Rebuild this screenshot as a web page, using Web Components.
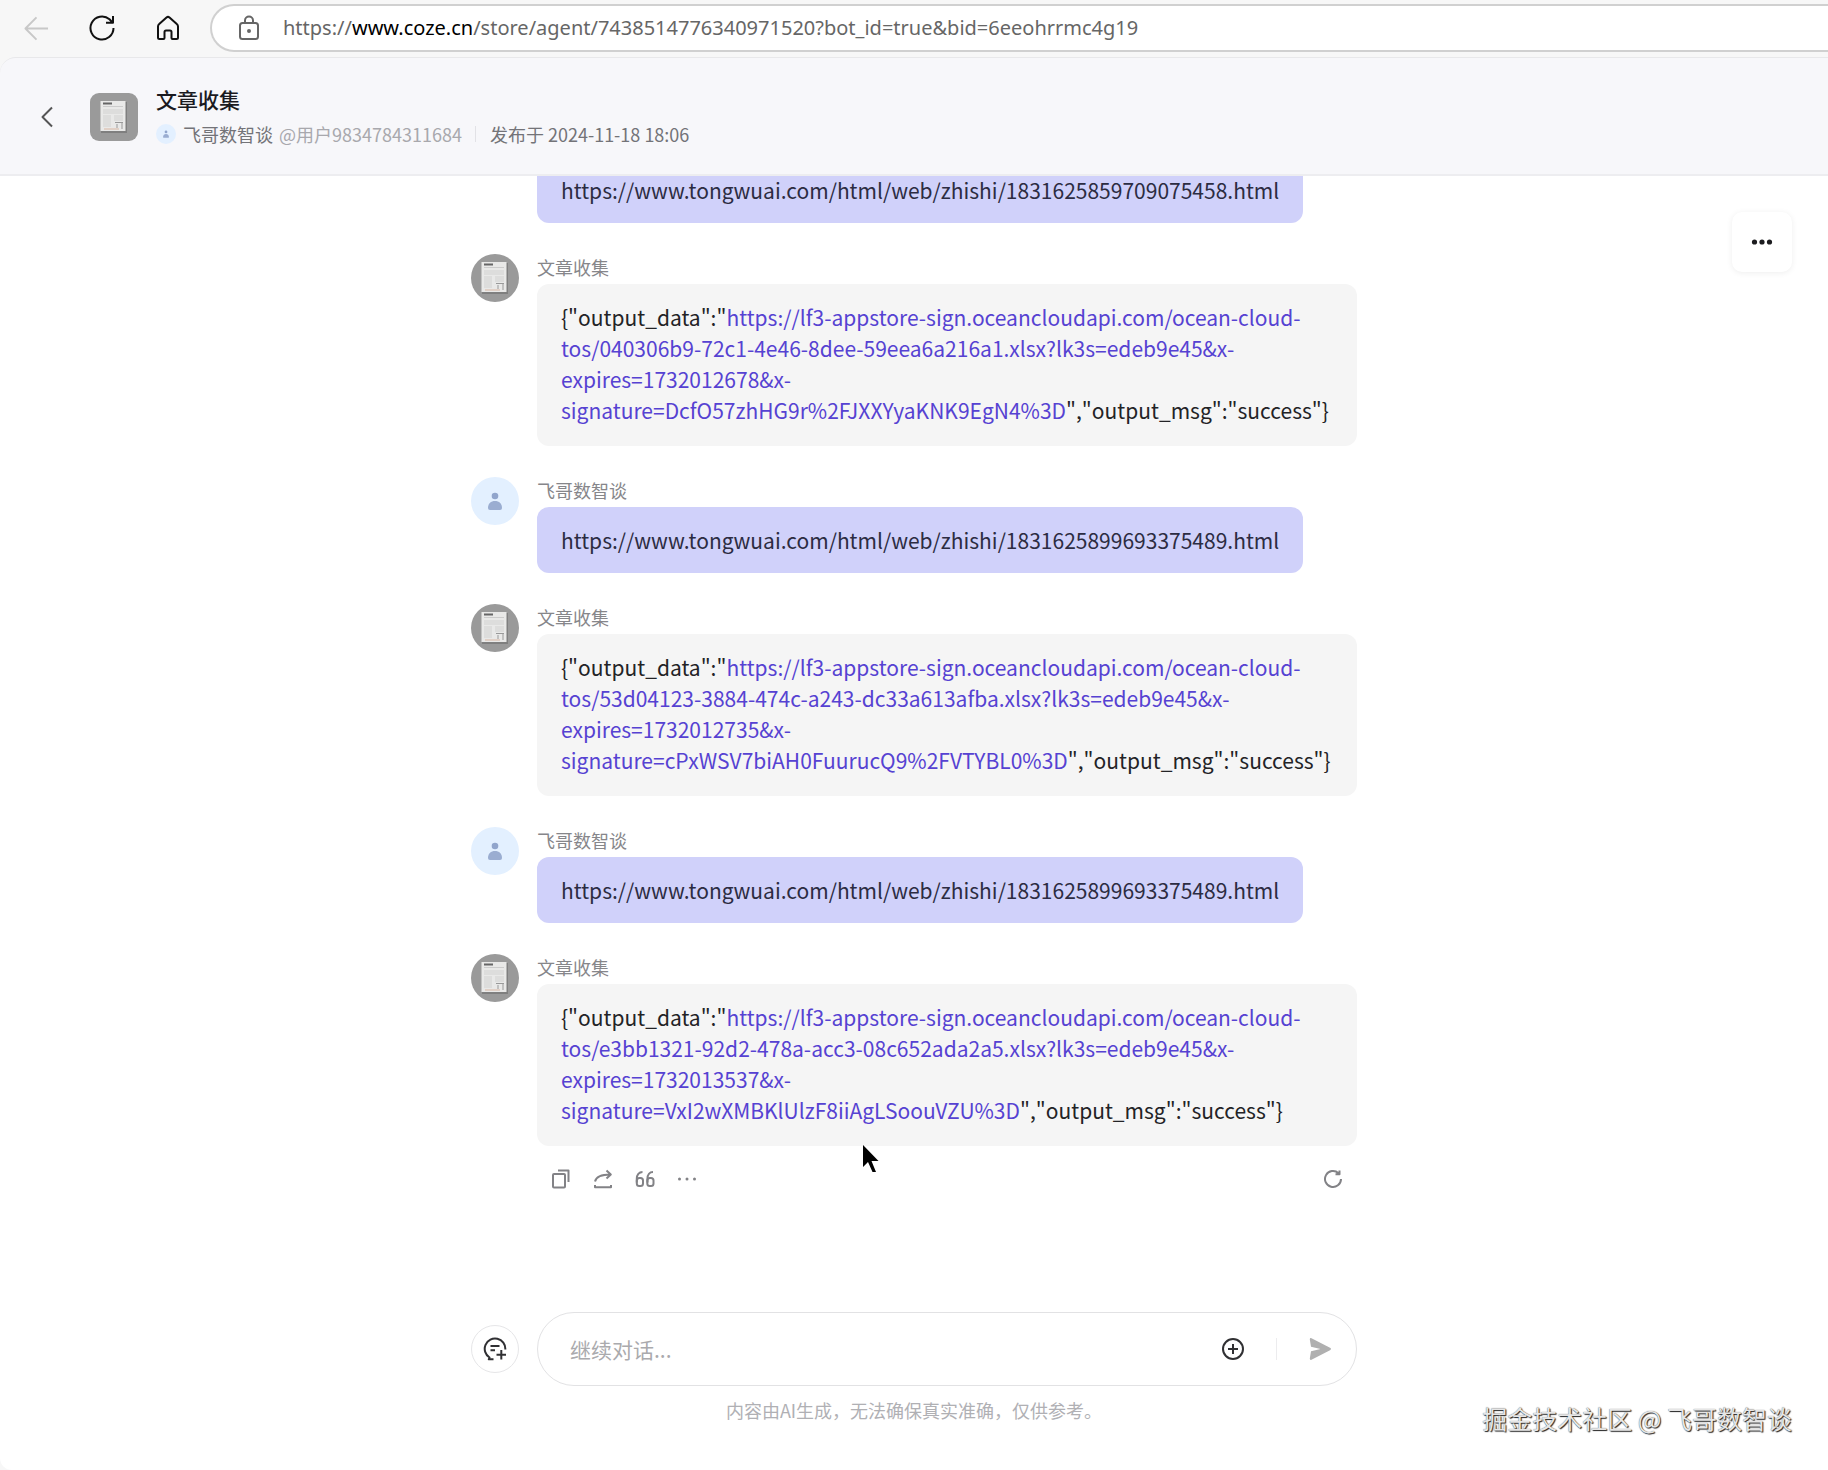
<!DOCTYPE html>
<html lang="zh-CN">
<head>
<meta charset="utf-8">
<title>文章收集</title>
<style>
  body {
    margin: 0;
    background: #f7f7f7;
    font-family: "Noto Sans CJK SC", sans-serif;
  }
</style>
</head>
<body>
<chat-app></chat-app>

<script>
const sharedStyle = `
  * { box-sizing: border-box; }
  button {
    display: flex;
    align-items: center;
    justify-content: center;
    margin: 0;
    padding: 0;
    border: 0;
    background: none;
    color: inherit;
    font: inherit;
  }
  svg { display: block; flex: none; }
`;

class BaseElement extends HTMLElement {
  constructor() {
    super();
    this._root = this.attachShadow({ mode: 'open' });
  }

  connectedCallback() {
    this._root.innerHTML = `<style>${sharedStyle}${this.getStyle()}</style>${this.getMarkup()}`;
  }
}

/* outline icons, one viewBox for each */
const ICONS = {
  back: ['0 0 26 26', '<path d="M25 13H1.500M13 1.500L1.500 13L13 24.500"/>'],
  reload: ['0 0 26 26', '<path d="M24.500 13A11.500 11.500 0 1 1 20.500 4.300L23.500 7.500M24 1V7.800H17"/>'],
  home: ['0 0 24 26', '<path d="M2 11.500Q2 10 3.200 9L10.500 2.500Q12 1.300 13.500 2.500L20.800 9Q22 10 22 11.500V22.500Q22 24 20.500 24H16.500Q15.500 24 15.500 23V17Q15.500 15.500 14 15.500H10Q8.500 15.500 8.500 17V23Q8.500 24 7.500 24H3.500Q2 24 2 22.500Z"/>'],
  lock: ['0 0 20 26', '<rect x="1" y="8" width="18" height="16" rx="2.500"/><path d="M6 8V5.500a4 4 0 0 1 8 0V8"/><circle cx="10" cy="16" r="1" fill="currentColor"/>'],
  chevron: ['0 0 12 22', '<path d="M11 1.500L1.500 11L11 20.500"/>'],
  copy: ['0 0 20 20', '<rect x="2" y="5" width="12" height="13.500" rx="1"/><path d="M7 1.500H17.500V13"/>'],
  share: ['0 0 20 20', '<path d="M2 12.500C3 8 7 5.500 17.500 5.500M13.500 1.500L17.800 5.500L13.500 9.500M2 16V18.300H18V16"/>'],
  quote: ['0 0 20 20', '<path d="M7.500 3C4 3 1.800 6 1.800 9.500V13.500M12.500 13.500V9.500C12.500 6 14.500 3 18 3"/><rect x="1.800" y="9" width="6.200" height="8" rx="2.500"/><rect x="12.300" y="9" width="6.200" height="8" rx="2.500"/>'],
  dots: ['0 0 20 20', '<g fill="currentColor" stroke="none"><circle cx="2.500" cy="10" r="1.500"/><circle cx="10" cy="10" r="1.500"/><circle cx="17.500" cy="10" r="1.500"/></g>'],
  more: ['0 0 22 22', '<g fill="currentColor" stroke="none"><circle cx="3.500" cy="11" r="2.600"/><circle cx="11" cy="11" r="2.600"/><circle cx="18.500" cy="11" r="2.600"/></g>'],
  retry: ['0 0 20 20', '<path d="M18 10A8 8 0 1 1 15.500 4.200M16.500 1.500V5.300H12.500"/>'],
  fresh: ['0 0 24 24', '<path d="M22.300 12.500A10.300 10.300 0 1 0 6.500 20.500L5.800 22.300H10.500M7.500 9H16.500M7.500 13.200H12M18.300 13V22.500M13.500 17.800H23"/>'],
  plus: ['0 0 24 24', '<circle cx="12" cy="12" r="10"/><path d="M12 7V17M7 12H17"/>'],
  send: ['0 0 24 24', '<path fill="currentColor" stroke="none" d="M3.500 1.200L22 10.800Q24 12 22 13.200L3.500 22.800Q1.800 23.500 1.800 21.500L3 14.300L12.500 12L3 9.700L1.800 2.500Q1.800 .500 3.500 1.200Z"/>'],
};

function icon(name, width, stroke = 2, height = width) {
  const [box, body] = ICONS[name];
  return `<svg width="${width}" height="${height}" viewBox="${box}" fill="none" stroke="currentColor"
    stroke-width="${stroke}" stroke-linejoin="round" aria-hidden="true">${body}</svg>`;
}

class UserAvatar extends BaseElement {
  getStyle() {
    return `
      :host { display: block; flex: none; width: 48px; height: 48px; border-radius: 50%; overflow: hidden; }
      :host([shape="square"]) { border-radius: 9px; }
      :host([size="small"]) { width: 20px; height: 20px; }
      svg { width: 100%; height: 100%; }
    `;
  }

  getMarkup() {
    if (this.getAttribute('kind') === 'bot') {
      return `
      <svg viewBox="0 0 48 48">
        <rect width="48" height="48" fill="#9a9a9a"/>
        <rect x="11" y="9" width="26" height="31" fill="#7f7f7f"/>
        <rect x="10.500" y="8" width="25" height="30" fill="#e9e9e8"/>
        <path d="M13 10.500h9" stroke="#666" stroke-width="2"/>
        <path d="M13 13.500h20" stroke="#ccc"/>
        <path d="M13 16h20v5H13zM13 22h8v12h-8zM24 22h9v6h-9z" fill="#dddddc"/>
        <path d="M25 29.500h8M27 31v4M32 29v7" stroke="#999"/>
        <path d="M14 36h15" stroke="#d8b7a4"/>
      </svg>`;
    }
    return `
      <svg viewBox="0 0 48 48">
        <rect width="48" height="48" fill="#e3f0ff"/>
        <circle cx="24" cy="19" r="3.300" fill="#91a5cc"/>
        <path d="M17 31C17 26.500 20 24 24 24S31 26.500 31 31Q31 33 29 33H19Q17 33 17 31Z" fill="#9aadd1"/>
      </svg>`;
  }
}
customElements.define('user-avatar', UserAvatar);

class BrowserBar extends BaseElement {
  getStyle() {
    return `
      :host { display: flex; align-items: center; height: 57px; padding: 4px 0 5px 20px; color: #111; }
      nav { display: flex; gap: 34px; }
      button { width: 32px; height: 32px; }
      button:disabled { color: #c8c8c8; }
      .address {
        display: flex;
        flex: 1;
        align-items: center;
        gap: 24px;
        min-width: 0;
        height: 48px;
        margin-left: 26px;
        padding-left: 27px;
        border: 2px solid #d0d0d0;
        border-right: 0;
        border-radius: 24px 0 0 24px;
        background: #fff;
        color: #666;
        font: 20px/32px "Noto Sans", sans-serif;
        white-space: nowrap;
        overflow: hidden;
      }
    `;
  }

  getMarkup() {
    return `
      <nav>
        <button disabled aria-label="后退">${icon('back', 25, 2)}</button>
        <button aria-label="刷新">${icon('reload', 26, 2)}</button>
        <button aria-label="主页">${icon('home', 24, 2, 26)}</button>
      </nav>
      <div class="address">
        ${icon('lock', 20, 2, 26)}
        <slot></slot>
      </div>`;
  }
}
customElements.define('browser-bar', BrowserBar);

class AgentHeader extends BaseElement {
  getStyle() {
    return `
      :host {
        display: flex;
        align-items: center;
        height: 119px;
        padding: 2px 32px 0 31px;
        border-top: 1px solid #e8e8ea;
        border-bottom: 2px solid #ededf0;
        border-radius: 16px 0 0 0;
        background: #f7f7fa;
      }
      button { width: 32px; height: 32px; margin-right: 27px; color: #555; }
      .info { margin-left: 18px; }
      h1 { margin: 0; color: #1a1a1f; font-size: 21px; line-height: 34px; font-weight: 500; }
      .meta { display: flex; align-items: center; height: 36px; color: #737378; font-size: 18px; line-height: 28px; white-space: nowrap; }
      .name { margin: 0 6px 0 7px; }
      .account { color: #a8a8ad; }
      .meta i { width: 1px; height: 16px; margin: 0 14px 0 13px; background: #e2e2e6; }
    `;
  }

  getMarkup() {
    return `
      <button aria-label="返回">${icon('chevron', 12, 2, 22)}</button>
      <user-avatar kind="bot" shape="square"></user-avatar>
      <div class="info">
        <h1>${this.getAttribute('name')}</h1>
        <div class="meta">
          <user-avatar size="small"></user-avatar>
          <span class="name">${this.getAttribute('author')}</span>
          <span class="account">${this.getAttribute('account')}</span>
          <i></i>
          <span>${this.getAttribute('published')}</span>
        </div>
      </div>`;
  }
}
customElements.define('agent-header', AgentHeader);

class ChatMessage extends BaseElement {
  getStyle() {
    return `
      :host { display: flex; gap: 18px; }
      .avatar { flex: none; width: 48px; }
      .body { flex: 1; min-width: 0; }
      .name { height: 30px; color: #86868a; font-size: 18px; line-height: 26px; }
      .bubble {
        width: 100%;
        padding: 18px 24px 20px;
        border-radius: 12px;
        background: #f5f5f5;
        color: #232326;
        font-size: 21px;
        line-height: 31px;
      }
      :host([from="user"]) .bubble { width: fit-content; max-width: 100%; padding-bottom: 17px; background: #d0d1fa; color: #2c2c42; }
    `;
  }

  getMarkup() {
    const name = this.getAttribute('name');
    const kind = this.getAttribute('from');
    return `
      <div class="avatar">${name ? `<user-avatar kind="${kind}"></user-avatar>` : ''}</div>
      <div class="body">
        ${name ? `<div class="name">${name}</div>` : ''}
        <div class="bubble"><slot></slot></div>
        <slot name="actions"></slot>
      </div>`;
  }
}
customElements.define('chat-message', ChatMessage);

class MessageActions extends BaseElement {
  getStyle() {
    return `
      :host { display: flex; height: 42px; margin-top: 12px; padding: 0 3px; color: #828286; }
      button { width: 42px; height: 42px; }
      .retry { margin-left: auto; }
    `;
  }

  getMarkup() {
    return `
      <button aria-label="复制">${icon('copy', 20)}</button>
      <button aria-label="分享">${icon('share', 20)}</button>
      <button aria-label="引用">${icon('quote', 20)}</button>
      <button aria-label="更多">${icon('dots', 20)}</button>
      <button class="retry" aria-label="重新生成">${icon('retry', 20)}</button>`;
  }
}
customElements.define('message-actions', MessageActions);

class ChatComposer extends BaseElement {
  getStyle() {
    return `
      :host { display: block; }
      form { display: flex; align-items: center; gap: 18px; margin: 0; }
      .fresh { flex: none; width: 48px; height: 48px; border: 1px solid #e6e6e8; border-radius: 50%; color: #303033; }
      .field {
        display: flex;
        flex: 1;
        align-items: center;
        height: 74px;
        padding: 0 24px 0 32px;
        border: 1px solid #e2e2e4;
        border-radius: 37px;
        background: #fff;
      }
      input {
        flex: 1;
        min-width: 0;
        padding: 0;
        border: 0;
        outline: 0;
        background: none;
        font: 21px/32px "Noto Sans CJK SC", sans-serif;
      }
      input::placeholder { color: #aaaaad; opacity: 1; }
      .field button { width: 24px; height: 24px; color: #303033; }
      .field i { width: 1px; height: 22px; margin: 0 31px; background: #ececee; }
      .field .send { color: #b0b0b0; }
      p { margin: 11px 0 0; color: #b0b0b4; font-size: 18px; line-height: 26px; text-align: center; }
    `;
  }

  getMarkup() {
    return `
      <form>
        <button class="fresh" type="button" aria-label="新对话">${icon('fresh', 24, 2)}</button>
        <div class="field">
          <input type="text" aria-label="消息" placeholder="继续对话...">
          <button type="button" aria-label="添加">${icon('plus', 24, 2)}</button>
          <i></i>
          <button class="send" type="button" aria-label="发送">${icon('send', 24)}</button>
        </div>
      </form>
      <p><slot></slot></p>`;
  }
}
customElements.define('chat-composer', ChatComposer);

class ChatApp extends BaseElement {
  getStyle() {
    return `
      :host { display: flex; flex-direction: column; height: 100vh; overflow: hidden; }
      main { display: flex; flex: 1; flex-direction: column; min-height: 0; position: relative; border-radius: 0 0 0 12px; background: #fff; }
      a { color: #5642d2; text-decoration: none; }
      b { color: #000; font-weight: 400; }
      .column { width: 100%; max-width: 886px; margin: 0 auto; }
      .messages {
        display: flex;
        flex: 1;
        flex-direction: column;
        justify-content: flex-end;
        gap: 31px;
        min-height: 0;
        padding-bottom: 112px;
        overflow: hidden;
      }
      chat-composer { padding-bottom: 47px; }
      chat-message { position: relative; flex: none; }
      .more {
        position: absolute;
        top: 36px;
        right: 36px;
        width: 60px;
        height: 60px;
        border-radius: 10px;
        background: #fff;
        box-shadow: 0 1px 6px rgba(0, 0, 0, 0.07);
        color: #1c1c1f;
      }
      .cursor { position: absolute; top: 190px; left: 391px; }
      .mark {
        position: absolute;
        right: 36px;
        bottom: 34px;
        color: #e6e6e6;
        font-size: 25px;
        line-height: 36px;
        text-shadow: 1px 1px 1px #222, 0 0 1px #555;
      }
    `;
  }

  getMarkup() {
    const reply = (file, expires, signature, extra = '') => `
        <chat-message from="bot" name="文章收集">{"output_data":"<a
          href="#">https://lf3-appstore-sign.oceancloudapi.com/ocean-cloud-<br>tos/${file}.xlsx?lk3s=edeb9e45&amp;x-<br>expires=${expires}&amp;x-<br>signature=${signature}%3D</a>","output_msg":"success"}${extra}</chat-message>`;

    return `
      <browser-bar><span>https://<b>www.coze.cn</b>/store/agent/7438514776340971520?bot_id=true&amp;bid=6eeohrrmc4g19</span></browser-bar>
      <agent-header name="文章收集" author="飞哥数智谈" account="@用户9834784311684" published="发布于 2024-11-18 18:06"></agent-header>
      <main>
        <div class="column messages">
          <chat-message from="user">https://www.tongwuai.com/html/web/zhishi/1831625859709075458.html</chat-message>
          ${reply('040306b9-72c1-4e46-8dee-59eea6a216a1', 1732012678, 'DcfO57zhHG9r%2FJXXYyaKNK9EgN4')}
          <chat-message from="user" name="飞哥数智谈">https://www.tongwuai.com/html/web/zhishi/1831625899693375489.html</chat-message>
          ${reply('53d04123-3884-474c-a243-dc33a613afba', 1732012735, 'cPxWSV7biAH0FuurucQ9%2FVTYBL0')}
          <chat-message from="user" name="飞哥数智谈">https://www.tongwuai.com/html/web/zhishi/1831625899693375489.html</chat-message>
          ${reply('e3bb1321-92d2-478a-acc3-08c652ada2a5', 1732013537, 'VxI2wXMBKlUlzF8iiAgLSoouVZU', `
            <message-actions slot="actions"></message-actions>
            <svg slot="actions" class="cursor" width="18" height="30" viewBox="0 0 18 30" aria-hidden="true">
              <path d="M1 1V23L6 18L10.500 28H14L9.500 17H16.500Z"/>
            </svg>`)}
        </div>
        <chat-composer class="column">内容由AI生成，无法确保真实准确，仅供参考。</chat-composer>
        <button class="more" aria-label="更多">${icon('more', 22)}</button>
        <div class="mark">掘金技术社区 @ 飞哥数智谈</div>
      </main>`;
  }
}
customElements.define('chat-app', ChatApp);
</script>
</body>
</html>
